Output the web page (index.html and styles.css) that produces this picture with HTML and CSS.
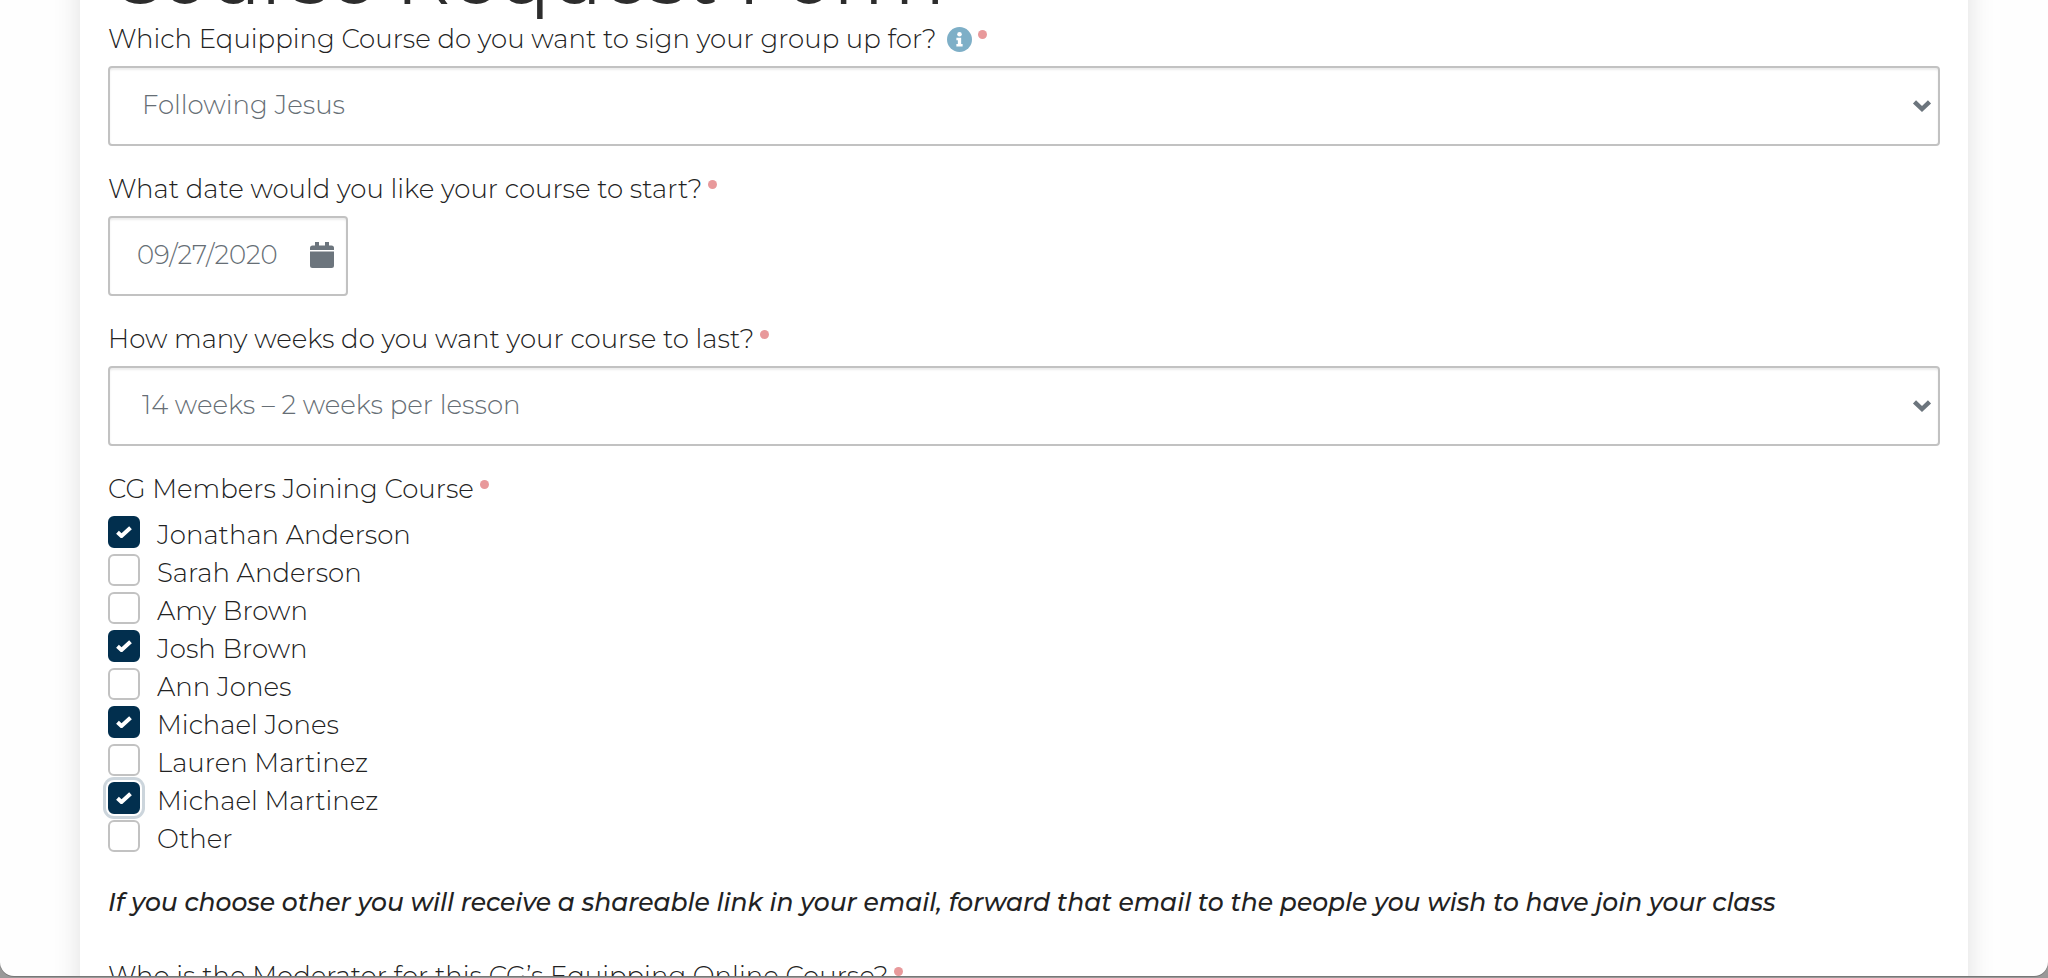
FILE: index.html
```html
<!DOCTYPE html>
<html lang="en">
<head>
    <meta charset="UTF-8">
    <meta name="viewport" content="width=device-width, initial-scale=1.0">
    <title>Course Request Form</title>
    <link rel="stylesheet" href="styles.css">
</head>
<body>
    <div class="window">
        <main class="card">
            <h1>Course Request Form</h1>
            <form class="request-form">
                <div class="field">
                    <div class="field-label">
                        <label for="course">Which Equipping Course do you want to sign your group up for?</label>
                        <svg class="info" viewBox="0 0 24 24" aria-hidden="true">
                            <circle cx="12" cy="12" r="12" fill="#7eafc7"/>
                            <circle cx="12" cy="7" r="2.2" fill="#fff"/>
                            <path d="M9 10.2h4.6v6.2H15v2.4H9v-2.4h1.4v-3.8H9z" fill="#fff"/>
                        </svg>
                        <span class="required"></span>
                    </div>
                    <div class="select-wrap">
                        <select id="course" class="control">
                            <option>Following Jesus</option>
                        </select>
                        <svg class="chevron" viewBox="0 0 18 12" aria-hidden="true">
                            <path d="M1.500 1.800 9 9l7.500-7.200" fill="none" stroke="#6c757d" stroke-width="4.500"/>
                        </svg>
                    </div>
                </div>

                <div class="field">
                    <div class="field-label">
                        <label for="start">What date would you like your course to start?</label>
                        <span class="required"></span>
                    </div>
                    <div class="date-wrap">
                        <input id="start" class="control" type="text" value="09/27/2020">
                        <svg class="calendar" viewBox="0 0 24 26" aria-hidden="true">
                            <path d="M0 8V6q0-2.500 2.500-2.500H5V0h4v3.500h6V0h4v3.500h2.500Q24 3.500 24 6v2zM0 9.500h24v14q0 2.500-2.500 2.500h-19Q0 26 0 23.500z" fill="#6c757d"/>
                        </svg>
                    </div>
                </div>

                <div class="field">
                    <div class="field-label">
                        <label for="weeks">How many weeks do you want your course to last?</label>
                        <span class="required"></span>
                    </div>
                    <div class="select-wrap">
                        <select id="weeks" class="control">
                            <option>14 weeks – 2 weeks per lesson</option>
                        </select>
                        <svg class="chevron" viewBox="0 0 18 12" aria-hidden="true">
                            <path d="M1.500 1.800 9 9l7.500-7.200" fill="none" stroke="#6c757d" stroke-width="4.500"/>
                        </svg>
                    </div>
                </div>

                <fieldset class="members">
                    <legend class="field-label">CG Members Joining Course <span class="required"></span></legend>
                    <label class="check"><input type="checkbox" checked><span>Jonathan Anderson</span></label>
                    <label class="check"><input type="checkbox"><span>Sarah Anderson</span></label>
                    <label class="check"><input type="checkbox"><span>Amy Brown</span></label>
                    <label class="check"><input type="checkbox" checked><span>Josh Brown</span></label>
                    <label class="check"><input type="checkbox"><span>Ann Jones</span></label>
                    <label class="check"><input type="checkbox" checked><span>Michael Jones</span></label>
                    <label class="check"><input type="checkbox"><span>Lauren Martinez</span></label>
                    <label class="check"><input class="focused" type="checkbox" checked><span>Michael Martinez</span></label>
                    <label class="check"><input type="checkbox"><span>Other</span></label>
                </fieldset>

                <p class="note">If you choose other you will receive a shareable link in your email, forward that email to the people you wish to have join your class</p>

                <div class="field">
                    <div class="field-label">
                        <label for="moderator">Who is the Moderator for this CG’s Equipping Online Course?</label>
                        <span class="required"></span>
                    </div>
                    <input id="moderator" class="control" type="text">
                </div>
            </form>
        </main>
    </div>
</body>
</html>
```
FILE: styles.css
```css
* {
    box-sizing: border-box;
}

body {
    margin: 0;
    height: 100vh;
    overflow: hidden;
    background: #999;
    font-family: Montserrat, Inter, sans-serif;
    font-size: 26px;
    font-weight: 350;
    line-height: 38px;
    color: #222;
}

.window {
    height: calc(100vh - 2px);
    overflow: hidden;
    background: #fefefe;
    border-radius: 0 0 14px 14px;
    box-shadow: 0 1px 0 #777;
}

.card {
    margin: 0 80px;
    padding: 0 28px;
    background: #fff;
    box-shadow: 0 0 26px rgba(0, 0, 0, 0.12);
}

h1 {
    margin: -68px 0 0;
    font-size: 77px;
    font-weight: 400;
    line-height: 88px;
    color: #2d2d2d;
}

.field {
    margin-bottom: 24px;
}

.field-label {
    display: flex;
    align-items: center;
    gap: 6px;
    height: 38px;
    margin-bottom: 8px;
    padding: 0;
}

.info {
    width: 25px;
    height: 25px;
    margin-left: 4px;
}

.required {
    align-self: flex-start;
    width: 9px;
    height: 9px;
    margin-top: 10px;
    border-radius: 50%;
    background: #e8999b;
}

.control {
    display: block;
    width: 100%;
    height: 80px;
    padding: 0 32px 2px;
    appearance: none;
    border: 2px solid #c2c2c2;
    border-radius: 4px;
    background: #fff;
    box-shadow: inset 0 2px 2px rgba(0, 0, 0, 0.08);
    font: inherit;
    color: #666e75;
}

.select-wrap,
.date-wrap {
    position: relative;
}

.date-wrap {
    width: 240px;
}

.date-wrap .control {
    padding: 0 27px 2px;
}

.chevron {
    position: absolute;
    top: 34px;
    right: 9px;
    width: 18px;
    height: 12px;
    overflow: visible;
    pointer-events: none;
}

.calendar {
    position: absolute;
    top: 26px;
    right: 14px;
    width: 24px;
    height: 26px;
}

.members {
    margin: 0;
    padding: 0;
    border: 0;
}

.check {
    display: flex;
    gap: 17px;
    height: 38px;
}

.check input {
    flex: none;
    width: 32px;
    height: 32px;
    margin: 0;
    appearance: none;
    border: 2px solid #c2c2c2;
    border-radius: 6px;
    background: #fff;
}

.check input:checked {
    border-color: #022f4e;
    background: #022f4e url("data:image/svg+xml,%3Csvg xmlns='http://www.w3.org/2000/svg' viewBox='0 0 16 12'%3E%3Cpath d='M1.500 6.200 5.500 10 14.500 1.800' fill='none' stroke='%23fff' stroke-width='4'/%3E%3C/svg%3E") center / 16px 12px no-repeat;
}

.check .focused {
    box-shadow: 0 0 0 2px #fff, 0 0 0 5px #ccd5dc;
}

.note {
    margin: 25px 0 36px;
    font-size: 25px;
    font-style: italic;
    font-weight: 500;
    white-space: nowrap;
}
```
